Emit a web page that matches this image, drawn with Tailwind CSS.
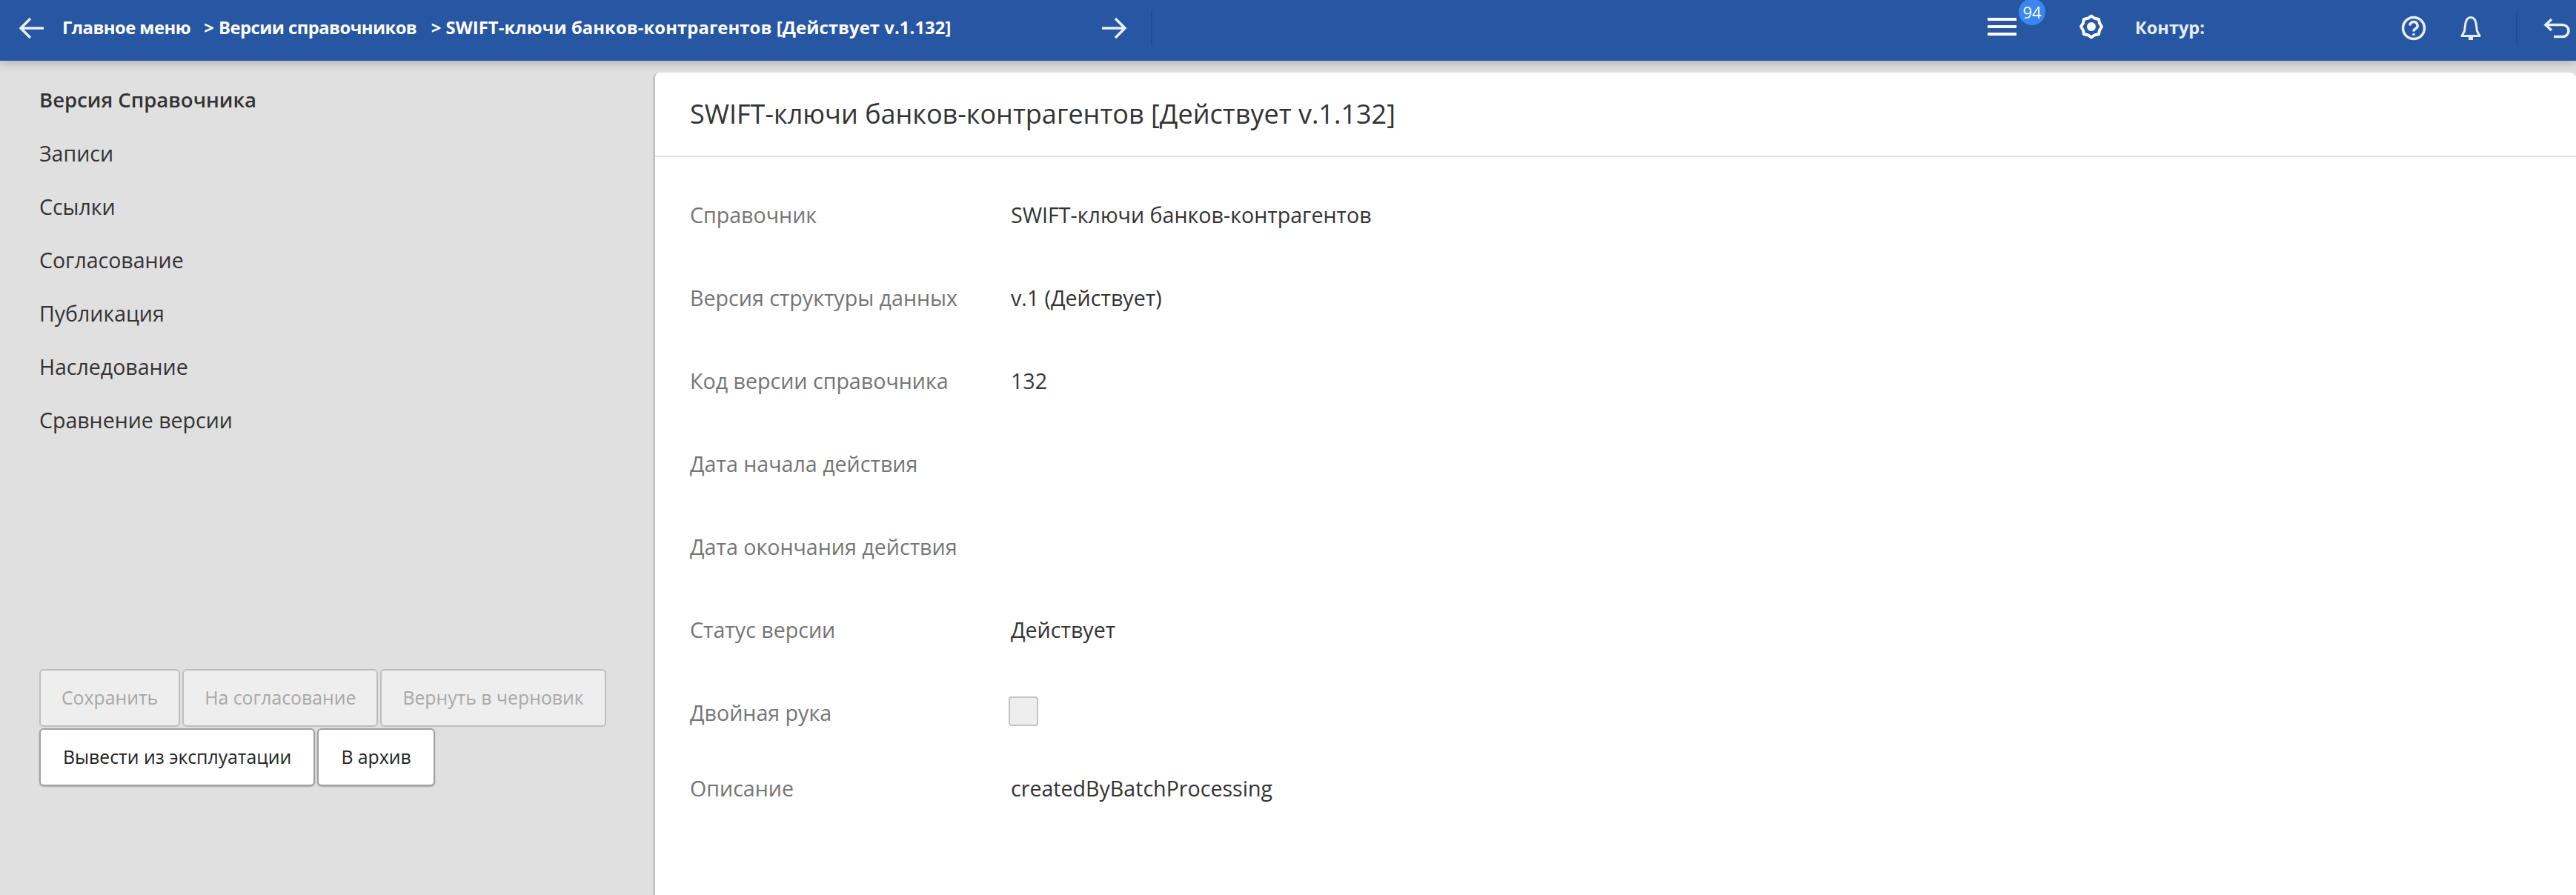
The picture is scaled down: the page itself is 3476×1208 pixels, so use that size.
<!DOCTYPE html>
<html lang="ru">
<head>
<meta charset="utf-8">
<script src="https://cdn.jsdelivr.net/npm/@tailwindcss/browser@4"></script>
</head>
<body class="font-['Open_Sans','Noto_Sans',sans-serif] bg-[#e0e0e0] overflow-hidden">
<div class="w-[3476px] h-[1208px] flex flex-col relative">
  <header class="h-[82px] shrink-0 pb-[6px] bg-[#2756a2] flex items-center text-white relative z-10 shadow-[0_4px_12px_rgba(0,0,0,0.2)]">
    <svg class="ml-[25px] w-[34px] h-[30px]" viewBox="0 0 34 30" fill="none" stroke="#e6eef8" stroke-width="3.5"><path d="M34 15H3M16 2 3 15l13 13"/></svg>
    <div class="ml-[25px] w-[1403px] text-[23.8px] font-bold whitespace-nowrap"><span class="tracking-[-0.55px]">Главное меню</span><span class="ml-[6px]">&nbsp; &gt; </span><span class="tracking-[-0.55px]">Версии справочников</span><span class="ml-[7px]">&nbsp; &gt; </span><span class="tracking-[0.09px]">SWIFT-ключи банков-контрагентов [Действует v.1.132]</span></div>
    <svg class="w-[34px] h-[30px]" viewBox="0 0 34 30" fill="none" stroke="#e6eef8" stroke-width="3.5"><path d="M0 15h31M18 2l13 13-13 13"/></svg>
    <div class="ml-[32px] w-[2px] h-[48px] bg-[#224c90]"></div>
    <div class="flex-1"></div>
    <div class="relative w-[39px] h-[24px] -mt-[4px] flex flex-col justify-between">
      <span class="block h-[4px] bg-white"></span><span class="block h-[4px] bg-white"></span><span class="block h-[4px] bg-white"></span>
      <span class="absolute left-[42px] top-[-26px] w-[36px] h-[36px] rounded-full bg-[#3b86f0] text-[22px] leading-[36px] text-center">94</span>
    </div>
    <svg class="ml-[84px] -mt-[4px] w-[34px] h-[34px]" viewBox="0 0 34 34" fill="none" stroke="#fff" stroke-width="4"><path d="M17 2.500 21 5.500 27 7 28 12 31 17 28 22 27 27 21 28.500 17 31.500 13 28.500 7 27 6 22 3 17 6 12 7 7 13 5.500Z" stroke-linejoin="round"/><circle cx="17" cy="17" r="6" fill="#fff" stroke="none"/></svg>
    <div class="ml-[42px] w-[359px] text-[23.5px] font-bold text-[#e6eef8]">Контур:</div>
    <svg class="w-[34px] h-[34px]" viewBox="0 0 34 34" fill="none" stroke="#e6eef8" stroke-width="3.5"><circle cx="17" cy="17" r="14.5"/><path d="M12 13.500a5 5 0 1 1 7.500 4.300c-1.800 1-2.500 1.700-2.500 3.700"/><circle cx="17" cy="25.500" r="1.800" fill="#e6eef8" stroke="none"/></svg>
    <svg class="ml-[46px] w-[28px] h-[34px]" viewBox="0 0 28 34" fill="none" stroke="#e6eef8" stroke-width="3"><path d="M14 2.500C9 2.500 7 8 6.500 13L5.500 21 2 27.500H26L22.500 21 21.500 13C21 8 19 2.500 14 2.500Z" stroke-linejoin="round"/><path d="M11 31h6" stroke-width="4"/></svg>
    <div class="ml-[47px] w-[2px] h-[48px] bg-[#224c90]"></div>
    <svg class="ml-[35px] w-[36px] h-[28px]" viewBox="0 0 36 28" fill="none" stroke="#e6eef8" stroke-width="3.500"><path d="M11 2 3 9.500l8 7.500M3 9.500h23a8 8 0 0 1 0 16H14"/></svg>
    <div class="w-[8px]"></div>
  </header>
  <div class="flex-1 flex min-h-0">
    <aside class="w-[881px] shrink-0 pt-[17px] pl-[53px] text-[28.5px] text-[#333]">
      <nav>
        <div class="h-[72px] leading-[72px] font-semibold text-[27.5px]">Версия Справочника</div>
        <div class="h-[72px] leading-[72px]">Записи</div>
        <div class="h-[72px] leading-[72px]">Ссылки</div>
        <div class="h-[72px] leading-[72px]">Согласование</div>
        <div class="h-[72px] leading-[72px]">Публикация</div>
        <div class="h-[72px] leading-[72px]">Наследование</div>
        <div class="h-[72px] leading-[72px]">Сравнение версии</div>
      </nav>
      <div class="mt-[300px] w-[790px] flex flex-wrap gap-x-[3px] gap-y-[2px] text-[24.8px]">
        <button class="h-[78px] px-[28px] rounded-[6px] border-2 border-[#bdbdbd] bg-[#eeeeee] text-[#a8a8a8]">Сохранить</button>
        <button class="h-[78px] px-[28px] rounded-[6px] border-2 border-[#bdbdbd] bg-[#eeeeee] text-[#a8a8a8]">На согласование</button>
        <button class="h-[78px] px-[28px] rounded-[6px] border-2 border-[#bdbdbd] bg-[#eeeeee] text-[#a8a8a8]">Вернуть в черновик</button>
        <button class="h-[78px] px-[30px] rounded-[6px] border-2 border-[#a0a0a0] bg-white text-[#222] shadow-[0_1px_2px_rgba(0,0,0,0.25)]">Вывести из эксплуатации</button>
        <button class="h-[78px] px-[30px] rounded-[6px] border-2 border-[#a0a0a0] bg-white text-[#222] shadow-[0_1px_2px_rgba(0,0,0,0.25)]">В архив</button>
      </div>
    </aside>
    <main class="flex-1 mt-[16px] bg-white rounded-t-[8px] border-l-[3px] border-[#c4c4c4]">
      <div class="h-[114px] pl-[47px] flex items-center border-b-2 border-[#e0e0e0] text-[36px] text-[#333]">SWIFT-ключи банков-контрагентов [Действует v.1.132]</div>
      <div class="pt-[22px] pl-[47px] text-[28.6px]">
        <div class="h-[112px] flex items-center"><span class="w-[433px] text-[#757575]">Справочник</span><span class="text-[#333]">SWIFT-ключи банков-контрагентов</span></div>
        <div class="h-[112px] flex items-center"><span class="w-[433px] text-[#757575]">Версия структуры данных</span><span class="text-[#333]">v.1 (Действует)</span></div>
        <div class="h-[112px] flex items-center"><span class="w-[433px] text-[#757575]">Код версии справочника</span><span class="text-[#333]">132</span></div>
        <div class="h-[112px] flex items-center"><span class="w-[433px] text-[#757575]">Дата начала действия</span></div>
        <div class="h-[112px] flex items-center"><span class="w-[433px] text-[#757575]">Дата окончания действия</span></div>
        <div class="h-[112px] flex items-center"><span class="w-[433px] text-[#757575]">Статус версии</span><span class="text-[#333]">Действует</span></div>
        <div class="h-[112px] flex items-center"><span class="w-[430px] text-[#757575]">Двойная рука</span><span class="block w-[40px] h-[40px] -mt-[4px] rounded-[4px] border-2 border-[#c4c4c4] bg-[#eeeeee]"></span></div>
        <div class="h-[92px] flex items-center"><span class="w-[433px] text-[#757575]">Описание</span><span class="text-[#333]">createdByBatchProcessing</span></div>
      </div>
    </main>
  </div>
</div>
</body>
</html>
